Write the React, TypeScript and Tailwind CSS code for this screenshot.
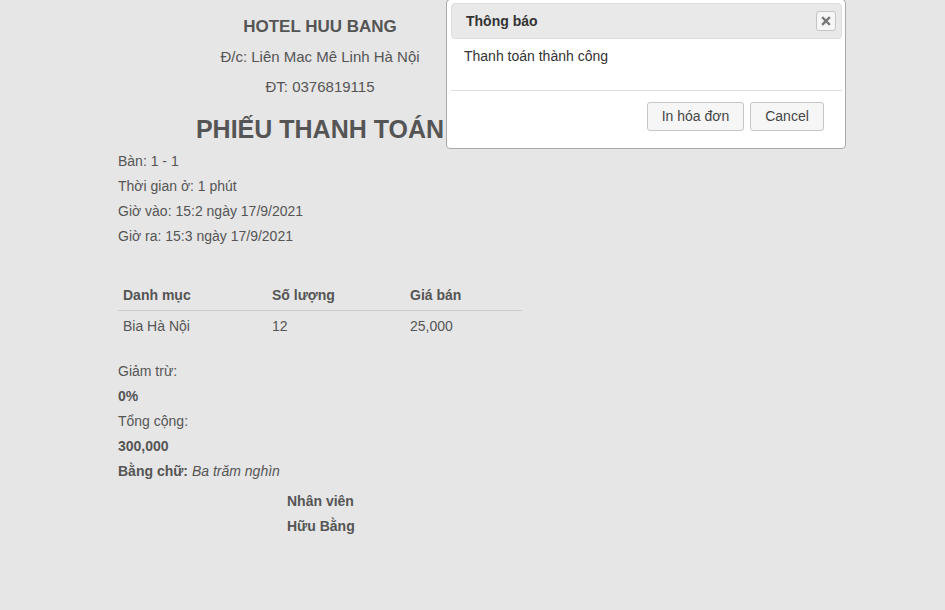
export default function App() {
  const font = { fontFamily: '"Liberation Sans", Arial, sans-serif' };
  return (
    <div className="relative h-[610px] w-[945px] overflow-hidden bg-[#e6e6e6] text-[14px] text-[#555]" style={font}>
      {/* Receipt */}
      <div className="ml-[118px] w-[404px] pt-[12px]">
        <div className="text-center text-[17px] font-bold leading-[30px]">HOTEL HUU BANG</div>
        <div className="text-center text-[15px] leading-[30px]">Đ/c: Liên Mac Mê Linh Hà Nội</div>
        <div className="text-center text-[15px] leading-[29px]">ĐT: 0376819115</div>
        <div className="mt-[8px] text-center text-[25px] font-bold leading-[40px]">PHIẾU THANH TOÁN</div>
        <div className="leading-[25px]">
          <div>Bàn: 1 - 1</div>
          <div>Thời gian ở: 1 phút</div>
          <div>Giờ vào: 15:2 ngày 17/9/2021</div>
          <div>Giờ ra: 15:3 ngày 17/9/2021</div>
        </div>
        <div className="mt-[31px]">
          <div className="grid grid-cols-[149px_138px_1fr] border-b border-[#ccc] px-[5px] pb-[5px] pt-[5px] font-bold leading-[20px]">
            <div>Danh mục</div>
            <div>Số lượng</div>
            <div>Giá bán</div>
          </div>
          <div className="grid grid-cols-[149px_138px_1fr] px-[5px] pt-[5px] leading-[20px]">
            <div>Bia Hà Nội</div>
            <div>12</div>
            <div>25,000</div>
          </div>
        </div>
        <div className="mt-[23px] leading-[25px]">
          <div>Giảm trừ:</div>
          <div className="font-bold">0%</div>
          <div>Tổng cộng:</div>
          <div className="font-bold">300,000</div>
          <div>
            <span className="font-bold">Bằng chữ:</span> <i>Ba trăm nghìn</i>
          </div>
        </div>
        <div className="mt-[5px] pl-[169px] font-bold leading-[25px]">
          <div>Nhân viên</div>
          <div>Hữu Bằng</div>
        </div>
      </div>

      {/* Dialog */}
      <div className="absolute left-[446px] top-[-1px] w-[400px] rounded-[4px] border border-[#aaa] bg-white pl-[4px] pr-[3px] pt-[3px] text-[#333]">
        <div className="flex h-[36px] items-center justify-between rounded-[4px] border border-[#ddd] bg-[#e9e9e9] pl-[14px] pr-[5px]">
          <span className="font-bold text-[#333]">Thông báo</span>
          <button
            type="button"
            className="flex h-[20px] w-[20px] items-center justify-center rounded-[3px] border border-[#c5c5c5] bg-[#f6f6f6]"
          >
            <svg viewBox="0 0 10 10" className="h-[10px] w-[10px]">
              <path d="M2 2L8 8M8 2L2 8" stroke="#777" strokeWidth="2.4" strokeLinecap="square" />
            </svg>
          </button>
        </div>
        <div className="h-[51px] px-[13px] pt-[7px] leading-[20px]">Thanh toán thành công</div>
        <div className="flex justify-end gap-[6px] border-t border-[#ddd] pb-[17px] pr-[18px] pt-[11px]">
          <button
            type="button"
            className="h-[29px] w-[97px] rounded-[3px] border border-[#c5c5c5] bg-[#f6f6f6] text-[14px] text-[#454545]"
          >
            In hóa đơn
          </button>
          <button
            type="button"
            className="h-[29px] w-[74px] rounded-[3px] border border-[#c5c5c5] bg-[#f6f6f6] text-[14px] text-[#454545]"
          >
            Cancel
          </button>
        </div>
      </div>
    </div>
  );
}
